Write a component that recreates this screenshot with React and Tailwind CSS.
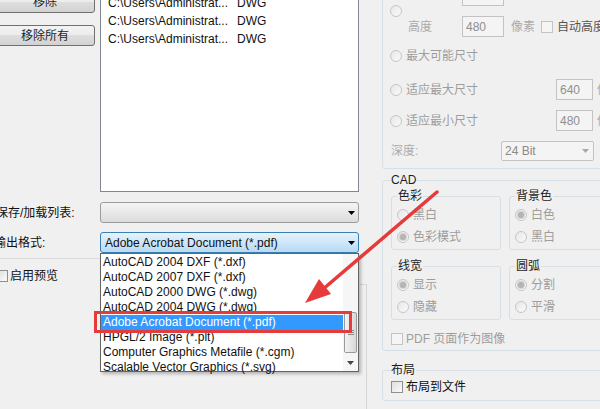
import React from "react";

const files = [
  "C:\\Users\\Administrat...",
  "C:\\Users\\Administrat...",
  "C:\\Users\\Administrat...",
];

const formats = [
  "AutoCAD 2004 DXF (*.dxf)",
  "AutoCAD 2007 DXF (*.dxf)",
  "AutoCAD 2000 DWG (*.dwg)",
  "AutoCAD 2004 DWG (*.dwg)",
  "Adobe Acrobat Document (*.pdf)",
  "HPGL/2 Image (*.plt)",
  "Computer Graphics Metafile (*.cgm)",
  "Scalable Vector Graphics (*.svg)",
];

const Radio = ({ checked }) => (
  <span className="w-[12px] h-[12px] rounded-full border border-[#c6c6c6] bg-linear-to-br from-[#e6e6e6] to-[#fbfbfb] flex items-center justify-center shrink-0">
    {checked && (
      <span className="w-[6px] h-[6px] rounded-full bg-[#b4b4b4] ring-1 ring-[#d2d2d2]" />
    )}
  </span>
);

const Check = ({ disabled }) => (
  <span
    className={
      disabled
        ? "w-[12px] h-[12px] border border-[#c4c4c4] bg-[#f5f5f5] shrink-0"
        : "w-[12px] h-[12px] border border-[#8e8f8f] bg-linear-to-br from-[#dedede] to-[#fbfbfb] shrink-0"
    }
  />
);

const Field = ({ w, children }) => (
  <div
    className={`${w} h-[21px] border border-[#c3c3c3] bg-[#f4f4f4] pl-[3px] flex items-center text-[#8f8f8f] shrink-0`}
  >
    {children}
  </div>
);

const Arrow = ({ color = "#000" }) => (
  <svg width="7" height="4" viewBox="0 0 7 4" className="shrink-0">
    <path d="M0 0h7L3.5 4z" fill={color} />
  </svg>
);

const Combo = ({ active, children }) => (
  <div
    className={
      active
        ? "w-[259px] h-[21px] rounded-[3px] border border-[#3c7fb1] bg-linear-to-b from-[#e6f3fc] to-[#b7daf4] flex items-center pl-[4px] pr-[3px]"
        : "w-[259px] h-[21px] rounded-[3px] border border-[#9c9c9c] bg-linear-to-b from-[#f5f5f5] to-[#dcdcdc] flex items-center pl-[4px] pr-[3px]"
    }
  >
    <span className="flex-1 truncate text-[#111]">{children}</span>
    <Arrow />
  </div>
);

const RadioRow = ({ checked, label, className = "" }) => (
  <div className={`flex items-center h-[16px] ${className}`}>
    <Radio checked={checked} />
    <span className="ml-[4px] text-[#9d9d9d] whitespace-nowrap">{label}</span>
  </div>
);

const SubBox = ({ title, first, second, checked }) => (
  <fieldset className="border border-[#d5dfe5] rounded-[3px] pl-[5px] pb-[4px]">
    <legend className="px-[1px] h-[16px] leading-[16px] text-[#1e1e1e]">{title}</legend>
    <RadioRow className="mt-[3px]" checked={checked === 0} label={first} />
    <RadioRow className="mt-[6px]" checked={checked === 1} label={second} />
  </fieldset>
);

export default function App() {
  return (
    <div className="relative w-[600px] h-[409px] overflow-hidden bg-[#f0f0f0] text-[12px] leading-[16px] text-[#111] font-['Liberation_Sans','Noto_Sans_CJK_SC',sans-serif]">
      <div className="flex h-full">
        {/* left pane */}
        <div className="w-[375px] shrink-0 flex flex-col">
          <div className="flex h-[192px]">
            <div className="-ml-[5px] w-[100px] -mt-[9px] flex flex-col gap-[12px]">
              <button className="h-[22px] rounded-[3px] border border-[#707070] bg-[linear-gradient(#f3f3f3,#ececec_50%,#dedede_50%,#d2d2d2)] text-[#1e1e1e]">
                移除
              </button>
              <button className="h-[21px] rounded-[3px] border border-[#707070] bg-[linear-gradient(#f3f3f3,#ececec_50%,#dedede_50%,#d2d2d2)] text-[#1e1e1e]">
                移除所有
              </button>
            </div>
            <div className="ml-[5px] w-[259px] h-full bg-white border-x border-b border-[#828790]">
              <div className="-mt-[6px]">
                {files.map((f, i) => (
                  <div key={i} className="flex h-[18px] items-center pl-[7px]">
                    <span className="w-[129px] whitespace-nowrap">{f}</span>
                    <span>DWG</span>
                  </div>
                ))}
              </div>
            </div>
          </div>

          <div className="mt-[10px] flex items-center h-[21px]">
            <span className="-ml-[4px] w-[104px] whitespace-nowrap">保存/加载列表:</span>
            <Combo />
          </div>
          <div className="mt-[9px] flex items-center h-[21px]">
            <span className="-ml-[6px] w-[106px] whitespace-nowrap">输出格式:</span>
            <Combo active>Adobe Acrobat Document (*.pdf)</Combo>
          </div>

          <div className="mt-[5px] flex-1 flex">
            <div className="w-[360px] border-t border-[#dcdcdc]">
              <div className="mt-[9px] -ml-[4px] flex items-center gap-[2px]">
                <Check />
                <span>启用预览</span>
              </div>
            </div>
            <div className="mt-[26px] w-[7px] border-t border-r border-[#d5d5d5]" />
          </div>
        </div>

        <div className="w-px bg-[#dadada]" />

        {/* right pane */}
        <div className="ml-[7px] w-[240px] shrink-0 flex flex-col">
          <div className="h-[169px] border-x border-b border-[#d5dfe5] rounded-b-[3px] pl-[7px] flex flex-col">
            <div className="-mt-[16px] flex items-center">
              <Radio />
              <div className="ml-[6px] flex flex-col gap-[10px]">
                <div className="flex items-center h-[22px]">
                  <span className="w-[54px] text-[#ababab]">宽度</span>
                  <Field w="w-[42px]">640</Field>
                </div>
                <div className="flex items-center h-[21px]">
                  <span className="w-[54px] text-[#ababab]">高度</span>
                  <Field w="w-[42px]">480</Field>
                  <span className="ml-[7px] text-[#ababab]">像素</span>
                  <span className="ml-[6px] flex">
                    <Check disabled />
                  </span>
                  <span className="ml-[4px] text-[#555] whitespace-nowrap">自动高度</span>
                </div>
              </div>
            </div>

            <RadioRow className="mt-[11px]" label="最大可能尺寸" />

            <div className="mt-[15px] flex items-center h-[21px]">
              <Radio />
              <span className="ml-[4px] w-[150px] text-[#9d9d9d]">适应最大尺寸</span>
              <Field w="w-[37px]">640</Field>
              <span className="ml-[4px] text-[#ababab]">像素</span>
            </div>
            <div className="mt-[10px] flex items-center h-[21px]">
              <Radio />
              <span className="ml-[4px] w-[150px] text-[#9d9d9d]">适应最小尺寸</span>
              <Field w="w-[37px]">480</Field>
              <span className="ml-[4px] text-[#ababab]">像素</span>
            </div>

            <div className="mt-[10px] flex items-center h-[20px] pl-[1px]">
              <span className="w-[110px] text-[#ababab]">深度:</span>
              <div className="w-[93px] h-[20px] rounded-[2px] border border-[#c3c3c3] bg-[#f4f4f4] flex items-center pl-[3px] pr-[4px]">
                <span className="flex-1 text-[#8a8a8a]">24 Bit</span>
                <Arrow color="#a8a8a8" />
              </div>
            </div>
          </div>

          <fieldset className="mt-[3px] border border-[#d5dfe5] rounded-[3px] pl-[7px] pb-[5px]">
            <legend className="px-[1px] h-[16px] leading-[16px] text-[#1e1e1e]">CAD</legend>
            <div className="ml-[1px] grid grid-cols-[110px_110px] gap-x-[8px] gap-y-[8px]">
              <SubBox title="色彩" first="黑白" second="色彩模式" checked={1} />
              <SubBox title="背景色" first="白色" second="黑白" checked={0} />
              <SubBox title="线宽" first="显示" second="隐藏" checked={0} />
              <SubBox title="圆弧" first="分割" second="平滑" checked={0} />
            </div>
            <div className="mt-[12px] ml-[1px] flex items-center h-[13px] gap-[3px]">
              <Check disabled />
              <span className="text-[#9d9d9d] whitespace-nowrap">PDF 页面作为图像</span>
            </div>
          </fieldset>

          <fieldset className="mt-[11px] border border-[#d5dfe5] rounded-[3px] pl-[7px] pb-[7px]">
            <legend className="px-[1px] h-[16px] leading-[16px] text-[#1e1e1e]">布局</legend>
            <div className="mt-[3px] ml-[1px] flex items-center h-[12px] gap-[3px]">
              <Check />
              <span className="whitespace-nowrap">布局到文件</span>
            </div>
          </fieldset>
        </div>
      </div>

      {/* open dropdown list */}
      <div className="absolute left-[100px] top-[253px] w-[259px] h-[119px] bg-white border border-[#646464] flex shadow-[2px_2px_3px_rgba(0,0,0,0.25)]">
        <div className="w-[242px] pt-[1px]">
          {formats.map((f) => (
            <div
              key={f}
              className={
                f.endsWith("(*.pdf)")
                  ? "h-[15px] leading-[15px] pl-[2px] whitespace-nowrap bg-[#3399ff] text-white"
                  : "h-[15px] leading-[15px] pl-[2px] whitespace-nowrap text-[#111]"
              }
            >
              {f}
            </div>
          ))}
        </div>
        <div className="w-[15px] bg-[#f6f6f6] flex flex-col items-center">
          <div className="mt-[58px] w-[13px] h-[41px] rounded-[2px] border border-[#9a9a9a] bg-linear-to-r from-[#f3f3f3] to-[#d8d8d8] flex flex-col items-center justify-center gap-[1px]">
            <span className="w-[6px] h-px bg-[#8a8a8a]" />
            <span className="w-[6px] h-px bg-[#8a8a8a]" />
            <span className="w-[6px] h-px bg-[#8a8a8a]" />
          </div>
          <div className="mt-[8px]">
            <Arrow color="#444" />
          </div>
        </div>
      </div>

      {/* annotation */}
      <div className="absolute left-[94px] top-[311px] w-[258px] h-[22px] border-[3px] border-[#e63b3b]" />
      <svg className="absolute left-0 top-0 pointer-events-none" width="600" height="409">
        <line x1="437" y1="192" x2="322" y2="290" stroke="#e63b3b" strokeWidth="3.5" strokeLinecap="round" />
        <polygon points="305,303 331,294 319,279" fill="#e63b3b" />
      </svg>
    </div>
  );
}
